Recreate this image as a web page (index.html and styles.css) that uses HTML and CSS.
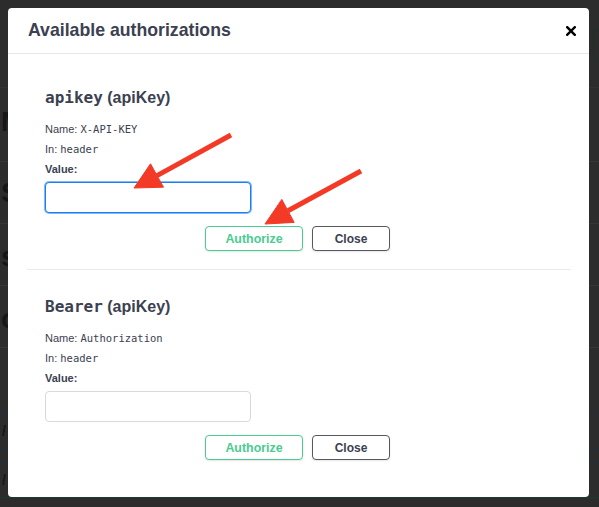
FILE: index.html
```html
<!DOCTYPE html>
<html lang="en">
<head>
<meta charset="utf-8">
<title>Available authorizations</title>
<link rel="stylesheet" href="styles.css">
</head>
<body>
  <!-- page behind the dialog, dimmed by the backdrop -->
  <div class="page">
    <div class="row row-top"><span class="frag"></span><span class="schemes-box"></span></div>
    <div class="row row-a"><span class="frag frag-m">M</span></div>
    <div class="row row-b"><span class="frag frag-s">S</span></div>
    <div class="row row-b"><span class="frag frag-s2">s</span></div>
    <div class="row row-b"><span class="frag frag-o">o</span></div>
    <div class="row row-c"></div>
    <div class="row row-d op-blue"><span class="dash">/</span></div>
    <div class="row row-e op-blue"></div>
    <div class="row row-d op-green"><span class="dash">/</span></div>
  </div>

  <div class="dialog" role="dialog" aria-labelledby="dlg-title">
    <header class="dialog-header">
      <h3 id="dlg-title" class="dialog-title">Available authorizations</h3>
      <button class="close-x" type="button" aria-label="Close">
        <svg width="10" height="10" viewBox="0 0 10 10"><path d="M1.2 1.2 L8.8 8.8 M8.8 1.2 L1.2 8.8" stroke="#000" stroke-width="2.4" stroke-linecap="square" fill="none"/></svg>
      </button>
    </header>
    <div class="dialog-body">
      <section class="auth first">
        <h4 class="auth-name"><code>apikey</code>&nbsp;(apiKey)</h4>
        <p class="meta">Name: <code>X-API-KEY</code></p>
        <p class="meta">In: <code>header</code></p>
        <label class="meta value-label">Value:</label>
        <input class="value-input focused" type="text">
        <div class="actions">
          <button class="btn btn-authorize" type="button">Authorize</button>
          <button class="btn btn-close" type="button">Close</button>
        </div>
      </section>
      <section class="auth second">
        <h4 class="auth-name"><code>Bearer</code>&nbsp;(apiKey)</h4>
        <p class="meta">Name: <code>Authorization</code></p>
        <p class="meta">In: <code>header</code></p>
        <label class="meta value-label">Value:</label>
        <input class="value-input" type="text">
        <div class="actions">
          <button class="btn btn-authorize" type="button">Authorize</button>
          <button class="btn btn-close" type="button">Close</button>
        </div>
      </section>
    </div>
  </div>

  <!-- callout arrows -->
  <svg class="callouts" width="599" height="507" viewBox="0 0 599 507">
    <g fill="#f23a26" stroke="#f23a26">
      <line x1="231" y1="135" x2="157" y2="175.6" stroke-width="5"/>
      <polygon points="134,188 163.5,187.2 150.5,163.8" stroke-width="1" stroke-linejoin="round"/>
      <line x1="361" y1="171" x2="288" y2="210.7" stroke-width="5"/>
      <polygon points="265,224 294.2,222.4 281.8,199.4" stroke-width="1" stroke-linejoin="round"/>
    </g>
  </svg>
</body>
</html>
```

FILE: styles.css
```css
* { box-sizing: border-box; }

html, body {
  margin: 0;
  padding: 0;
  width: 599px;
  height: 507px;
  overflow: hidden;
}

body {
  background: #2c2c2c;
  font-family: "Liberation Sans", Arial, sans-serif;
  color: #3b4151;
}

/* ---- dimmed page underneath ---- */
.page {
  display: flex;
  flex-direction: column;
}

.row {
  display: flex;
  justify-content: space-between;
  align-items: center;
  border-bottom: 1px solid #363636;
  overflow: hidden;
}

.row-top { height: 88px; align-items: flex-start; border-bottom-color: #333; }
.row-a { height: 74px; }
.row-b { height: 62px; }
.row-c { height: 66px; border-bottom-color: #1e3140; }
.row-d { height: 35px; }
.row-e { height: 14px; }
.op-blue { border-bottom-color: #1e3140; }
.op-green { border-bottom-color: #1c3a2c; }

/* page headings sit mostly under the dialog; only a sliver shows at the left */
.frag {
  font-weight: 700;
  font-size: 28px;
  color: #161616;
  line-height: 1;
  margin-left: 1px;
}

.frag-m { margin-top: -6px; }
.frag-s { margin-top: 0; }
.frag-s2 { margin-top: 4px; }
.frag-o { margin-top: 4px; }

.dash {
  font-size: 14px;
  font-weight: 700;
  color: #151515;
  margin-left: 2px;
}

.schemes-box {
  width: 40px;
  height: 32px;
  margin-top: 29px;
  margin-right: -33px;
  border: 1px solid #1d3328;
  border-radius: 4px;
}

/* ---- dialog ---- */
.dialog {
  position: fixed;
  top: 8px;
  left: 8px;
  width: 581px;
  height: 489px;
  background: #fff;
  border-radius: 4px;
}

.dialog-header {
  height: 46px;
  display: flex;
  align-items: center;
  justify-content: space-between;
  padding: 0 13px 0 20px;
  border-bottom: 1px solid #e8e8e8;
}

.dialog-title {
  margin: 0;
  font-size: 17.7px;
  font-weight: 700;
  color: #3b4151;
  line-height: 1;
  padding-top: 1px;
}

.close-x {
  border: 0;
  background: none;
  padding: 0;
  margin: 0;
  width: 10px;
  height: 10px;
  display: flex;
  margin-top: 1px;
}

.dialog-body {
  padding: 0 18px 0 19px;
}

.auth {
  display: flex;
  flex-direction: column;
  align-items: flex-start;
  padding-left: 18px;
}

.auth.first {
  padding-top: 34px;
  padding-bottom: 18px;
  border-bottom: 1px solid #ebebeb;
}

.auth.second {
  padding-top: 27px;
}

.auth-name {
  margin: 0;
  font-size: 16px;
  font-weight: 700;
  line-height: 20px;
  color: #3b4151;
}

.auth-name code {
  font-family: "DejaVu Sans Mono", monospace;
  font-size: 16px;
  font-weight: 700;
}

.meta {
  margin: 0;
  font-size: 11px;
  line-height: 20px;
  color: #3b4151;
}

.auth-name + .meta { margin-top: 11px; }

.meta code {
  font-family: "DejaVu Sans Mono", monospace;
  font-size: 10.5px;
  color: #3b4151;
}

.value-label {
  font-weight: 700;
}

.value-input {
  margin-top: 3px;
  width: 206px;
  height: 31px;
  border: 1px solid #d9d9d9;
  border-radius: 4px;
  background: #fff;
  padding: 0 8px;
  outline: none;
}

.value-input.focused {
  border-color: #1c7ef2;
  box-shadow: 0 0 0 1px rgba(28, 126, 242, 0.55);
}

.actions {
  align-self: stretch;
  margin-left: -18px;
  margin-top: 13px;
  display: flex;
  justify-content: center;
  gap: 9px;
  padding-right: 3px;
}

.btn {
  height: 25px;
  border-radius: 4px;
  background: #fff;
  font-family: "Liberation Sans", Arial, sans-serif;
  font-size: 12px;
  font-weight: 700;
  padding: 0;
  box-shadow: 0 1px 2px rgba(0, 0, 0, 0.1);
}

.btn-authorize {
  width: 98px;
  border: 1px solid #49cc90;
  color: #49cc90;
  font-size: 12.4px;
}

.btn-close {
  width: 78px;
  border: 1px solid #55585e;
  color: #3b4151;
}

/* ---- arrows over everything ---- */
.callouts {
  position: fixed;
  top: 0;
  left: 0;
  pointer-events: none;
}
```
